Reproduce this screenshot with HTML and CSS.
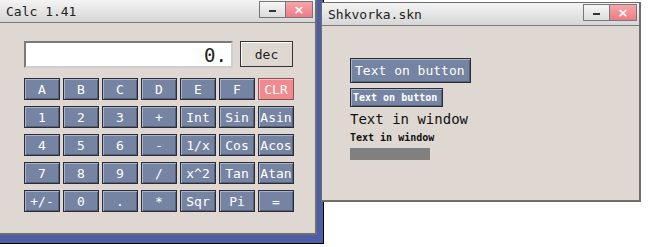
FILE: index.html
```html
<!DOCTYPE html>
<html>
<head>
  <meta charset="UTF-8">
  <title>Calc</title>
  <link rel="stylesheet" href="styles.css">
</head>
<body>
  <div class="escritorio">
    <div class="ventana calc">
      <div class="titulo">
        <span>Calc 1.41</span>
        <div class="controles">
          <span class="min"><i></i></span>
          <span class="cerrar">&times;</span>
        </div>
      </div>
      <div class="cuerpo">
        <div class="fila-pantalla">
          <div class="pantalla">0.</div>
          <button class="dec">dec</button>
        </div>
        <div class="teclado">
          <button>A</button><button>B</button><button>C</button><button>D</button><button>E</button><button>F</button><button class="clr">CLR</button>
          <button>1</button><button>2</button><button>3</button><button>+</button><button>Int</button><button>Sin</button><button>Asin</button>
          <button>4</button><button>5</button><button>6</button><button>-</button><button>1/x</button><button>Cos</button><button>Acos</button>
          <button>7</button><button>8</button><button>9</button><button>/</button><button>x^2</button><button>Tan</button><button>Atan</button>
          <button>+/-</button><button>0</button><button>.</button><button>*</button><button>Sqr</button><button>Pi</button><button>=</button>
        </div>
      </div>
    </div>

    <div class="ventana skin">
      <div class="titulo">
        <span>Shkvorka.skn</span>
        <div class="controles">
          <span class="min"><i></i></span>
          <span class="cerrar">&times;</span>
        </div>
      </div>
      <div class="cuerpo muestra">
        <button class="boton-grande">Text on button</button>
        <button class="boton-chico">Text on button</button>
        <p class="texto-grande">Text in window</p>
        <p class="texto-chico">Text in window</p>
        <div class="barra"></div>
      </div>
    </div>
  </div>
</body>
</html>
```

FILE: styles.css
```css
/* Estilos generales */
body {
  margin: 0;
  padding: 0;
  background-color: #fff;
  font-family: 'DejaVu Sans Mono', 'Liberation Mono', monospace;
}

.escritorio {
  position: relative;
  width: 323px;
  height: 243px;
  background-color: #4b5ea6;
  border-right: 1px solid #000;
  border-bottom: 1px solid #000;
}

/* Ventanas */
.ventana {
  background-color: #dfd8d2;
  border: 2px solid #6e6e6e;
  box-sizing: border-box;
  display: flex;
  flex-direction: column;
}

.calc {
  width: 317px;
  height: 235px;
  border-top: none;
  border-left: none;
}

.skin {
  position: absolute;
  left: 321px;
  top: 2px;
  width: 320px;
  height: 200px;
  border-width: 1px 2px 2px 1px;
}

.titulo {
  height: 22px;
  display: flex;
  align-items: center;
  justify-content: space-between;
  padding-left: 6px;
  background: linear-gradient(#f4f4f4, #d6d6d6);
  border-bottom: 1px solid #7a7a7a;
  font-size: 13px;
  color: #222;
}

.controles {
  display: flex;
  align-self: flex-start;
  margin-top: 1px;
  margin-right: 2px;
}

.controles span {
  width: 27px;
  height: 17px;
  display: flex;
  align-items: center;
  justify-content: center;
  box-sizing: border-box;
}

.min {
  background: linear-gradient(#f6f6f6, #dcdcdc);
  border: 1px solid #777;
}

.min i {
  width: 7px;
  height: 2px;
  margin-top: 2px;
  background-color: #333;
}

.cerrar {
  background: linear-gradient(#f7a5aa, #ec7c84);
  border: 1px solid #777;
  border-left: none;
  color: #fff;
  font-family: 'DejaVu Sans', sans-serif;
  font-size: 13px;
  font-weight: bold;
}

/* Calculadora */
.calc .cuerpo {
  padding: 18px 0 0 24px;
}

.fila-pantalla {
  display: flex;
  gap: 7px;
  margin-bottom: 10px;
}

.pantalla {
  width: 209px;
  height: 27px;
  box-sizing: border-box;
  background-color: #fff;
  border: 2px solid #7a7a7a;
  border-right-color: #cfcfcf;
  border-bottom-color: #cfcfcf;
  text-align: right;
  padding-right: 4px;
  font-size: 19px;
  line-height: 24px;
  color: #222;
}

.dec {
  width: 53px;
  height: 26px;
  background-color: #dfd8d2;
  border: 1px solid #333;
  box-shadow: inset 1px 1px 0 #fff;
  font-family: inherit;
  font-size: 13px;
  color: #222;
  padding: 0;
}

.teclado {
  display: grid;
  grid-template-columns: repeat(7, 36px);
  grid-auto-rows: 22px;
  column-gap: 3px;
  row-gap: 6px;
}

.teclado button,
.boton-grande,
.boton-chico {
  background-color: #7684a3;
  border: 1px solid #2c2c34;
  box-shadow: inset 1px 1px 0 #aab4c8, inset -1px -1px 0 #55607a;
  color: #fff;
  font-family: inherit;
  font-size: 13px;
  padding: 0;
  white-space: nowrap;
}

.teclado .clr {
  background-color: #f08a8e;
  border-color: #8a4f53;
  box-shadow: inset 1px 1px 0 #f8c0c2;
}

/* Muestra de skin */
.muestra {
  padding: 32px 0 0 28px;
  display: flex;
  flex-direction: column;
  align-items: flex-start;
}

.boton-grande {
  width: 121px;
  height: 25px;
  font-size: 13px;
  text-align: left;
  padding-left: 4px;
}

.boton-chico {
  width: 93px;
  height: 19px;
  margin-top: 5px;
  font-size: 10px;
  font-weight: bold;
  text-align: left;
  padding-left: 2px;
}

.texto-grande {
  margin: 4px 0 0;
  font-size: 14px;
  color: #111;
}

.texto-chico {
  margin: 5px 0 0;
  font-size: 10px;
  font-weight: bold;
  color: #111;
}

.barra {
  width: 80px;
  height: 12px;
  margin-top: 5px;
  background-color: #808080;
}
```
